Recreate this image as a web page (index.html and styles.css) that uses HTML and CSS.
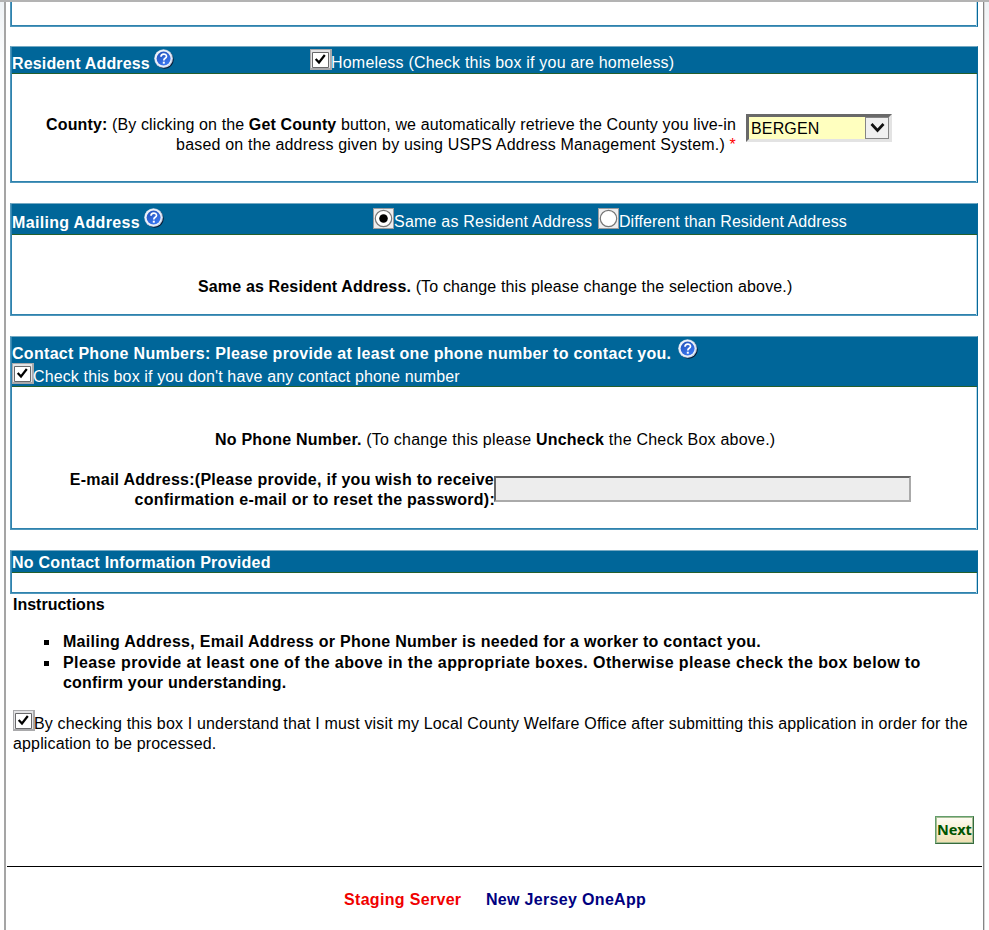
FILE: index.html
```html
<!DOCTYPE html>
<html lang="en">
<head>
<meta charset="utf-8">
<title>New Jersey OneApp</title>
<link rel="stylesheet" href="styles.css">
</head>
<body>
<svg class="defs" width="0" height="0" aria-hidden="true">
  <defs>
    <linearGradient id="blue" x1="0" y1="0" x2="0.6" y2="1"><stop offset="0" stop-color="#2350b8"/><stop offset="1" stop-color="#3976ef"/></linearGradient>
    <symbol id="help" viewBox="0 0 20 20">
      <circle cx="10.7" cy="10.7" r="9" fill="#071830"/>
      <circle cx="9.6" cy="9.6" r="9.4" fill="#b7c5dd"/>
      <circle cx="9.3" cy="9.3" r="8.6" fill="#edf2fa"/>
      <circle cx="9.6" cy="9.6" r="7" fill="url(#blue)"/>
      <path d="M7 7.7C7 4.3 12.5 4.3 12.5 7.4C12.5 9.4 9.8 9.2 9.8 11.5" fill="none" stroke="#fff" stroke-width="1.7"/>
      <rect x="8.8" y="12.7" width="2" height="2" fill="#fff"/>
    </symbol>
    <symbol id="check" viewBox="0 0 22 21">
      <path d="M0 0H22V21H0Z" fill="#a9a9ab"/><path d="M1 1H20V19H1Z" fill="#e3e3e5"/>
      <path d="M2.5 3.5H18.5V18.5H2.5Z" fill="#fff" stroke="#69696b"/>
      <path d="M5.7 10L9 13.5L14.8 6" fill="none" stroke="#000" stroke-width="2.2"/>
    </symbol>
    <symbol id="radio" viewBox="0 0 21 21">
      <path d="M0 0H21V21H0Z" fill="#9c9c9e"/><path d="M1 1H20V20H1Z" fill="#ededee"/>
      <circle cx="10.5" cy="10.5" r="8.2" fill="#fff" stroke="#777" stroke-width="1.2"/>
    </symbol>
  </defs>
</svg>
<div class="page">
  <section class="panel panel-top"></section>

  <section class="panel resident">
    <header class="bar">
      <b class="t title-res">Resident Address</b><svg class="help"><use href="#help"/></svg>
      <svg class="check"><use href="#check"/></svg><span class="t homeless">Homeless (Check this box if you are homeless)</span>
    </header>
    <div class="county">
      <div class="county-label">
        <div class="t c1"><b>County:</b> (By clicking on the <b>Get County</b> button, we automatically retrieve the County you live-in</div>
        <div class="t c2">based on the address given by using USPS Address Management System.) <span class="req">*</span></div>
      </div>
      <div class="select"><span class="t bergen">BERGEN</span><span class="arrow"><svg width="17" height="12" viewBox="0 0 17 12"><path d="M2.5 2L8.5 8.5L14.5 2" fill="none" stroke="#111" stroke-width="2.7"/></svg></span></div>
    </div>
  </section>

  <section class="panel mailing">
    <header class="bar">
      <b class="t title-mail">Mailing Address</b><svg class="help"><use href="#help"/></svg>
      <svg class="radio radio-on"><use href="#radio"/><circle cx="10.5" cy="10.5" r="4.3"/></svg><span class="t same">Same as Resident Address</span>
      <svg class="radio"><use href="#radio"/></svg><span class="t diff">Different than Resident Address</span>
    </header>
    <div class="t same-note"><b>Same as Resident Address.</b> (To change this please change the selection above.)</div>
  </section>

  <section class="panel phones">
    <header class="bar">
      <div class="row"><b class="t title-phone">Contact Phone Numbers: Please provide at least one phone number to contact you.</b><svg class="help"><use href="#help"/></svg></div>
      <div class="row"><svg class="check"><use href="#check"/></svg><span class="t nophone">Check this box if you don't have any contact phone number</span></div>
    </header>
    <div class="t phone-note"><b>No Phone Number.</b> (To change this please <b>Uncheck</b> the Check Box above.)</div>
    <div class="email">
      <div class="email-label"><b class="t e1">E-mail Address:(Please provide, if you wish to receive</b><b class="t e2">confirmation e-mail or to reset the password):</b></div>
      <div class="field"></div>
    </div>
  </section>

  <section class="panel nocontact">
    <header class="bar"><b class="t title-none">No Contact Information Provided</b></header>
  </section>

  <div class="instructions">
    <b class="t ins">Instructions</b>
    <ul>
      <li><b class="t l1">Mailing Address, Email Address or Phone Number is needed for a worker to contact you.</b></li>
      <li><b class="t l2">Please provide at least one of the above in the appropriate boxes. Otherwise please check the box below to</b><b class="t l3">confirm your understanding.</b></li>
    </ul>
    <div class="row consent"><svg class="check"><use href="#check"/></svg><span class="t k1">By checking this box I understand that I must visit my Local County Welfare Office after submitting this application in order for the</span></div>
    <div class="t k2">application to be processed.</div>
  </div>
  <div class="actions"><div class="next">Next</div></div>
  <footer><b class="t staging">Staging Server</b><b class="t oneapp">New Jersey OneApp</b></footer>
</div>
</body>
</html>
```
FILE: styles.css
```css
* { box-sizing: border-box; }
body { margin: 0; height: 930px; overflow: hidden; background: linear-gradient(#eef2f5, #fff 70px); color: #000; font: 16px/20px "Liberation Sans", Arial, sans-serif; }
.defs { position: absolute; }
.page { height: 930px; margin-left: 4px; width: 980px; border-left: 2px solid #a5a5a5; border-right: 1px solid #858585; box-shadow: 1px 0 #d5d5d5; background: #fff; }
.page::before { content: ""; display: block; height: 2px; margin: 0 -6px; background: #b3b3b3; }
.t { display: block; width: max-content; white-space: nowrap; flex: none; letter-spacing: .15px; }
svg { flex: none; display: block; }
.title-res { width: 138px; }
.homeless { letter-spacing: .2px; }
.c1 { letter-spacing: .13px; }
.c2 { letter-spacing: .185px; }
.title-mail { width: 128px; letter-spacing: .33px; }
.same { width: 198px; letter-spacing: .22px; }
.diff { letter-spacing: .07px; }
.title-phone { width: 660px; letter-spacing: .3px; }
.nophone { letter-spacing: .13px; }
.phone-note { letter-spacing: .22px; }
.e1, .title-none { letter-spacing: .26px; }
.e2 { letter-spacing: .26px; margin-right: -1px; }
.ins { letter-spacing: 0; }
.l1 { letter-spacing: .287px; }
.l2 { letter-spacing: .4px; }
.l3 { letter-spacing: .21px; }
.k1 { letter-spacing: .165px; }
.panel { width: 968px; margin: 0 0 20px 4px; border: 1px solid #4f97bc; border-top-color: #75a9c3; border-right-color: #06699a; box-shadow: inset 1px 0 #2f82ad, inset -1px 0 #b8d8e8, inset 0 -1px #2f82ad; }
.bar { display: flex; align-items: flex-start; margin: 0 0 0 1px; color: #fff; background: #069; border-bottom: 1px solid #255f2c; }
.row { display: flex; }
.help { width: 20px; height: 20px; }
.check { width: 22px; height: 21px; }
.check + .t { margin-left: -1px; }
.radio { width: 21px; height: 21px; }
.panel-top { height: 25px; margin-bottom: 19px; border-top: 0; }
.resident { height: 137px; }
.resident .bar { height: 27px; }
.resident .bar .t { margin-top: 6px; }
.resident .bar .title-res { margin-top: 7px; }
.resident .help { margin: 2px 0 0 4px; }
.resident .check { margin: 2px 0 0 136px; }
.county { display: flex; padding-top: 41px; }
.county-label { width: 725px; display: flex; flex-direction: column; align-items: flex-end; }
.req { color: #f00; }
.select { width: 146px; height: 28px; margin: -1px 0 0 10px; display: flex; border: 3px solid #696969; border-right-color: #e3e3e3; border-bottom-color: #e3e3e3; background: #ffffbf; padding-left: 2px; }
.bergen { margin-top: 2px; }
.arrow { margin-left: auto; width: 24px; height: 22px; display: flex; align-items: center; justify-content: center; border: 1px solid #858585; background: #f0f0f0; }
.mailing { height: 113px; }
.mailing .bar { height: 31px; }
.mailing .bar .t { margin-top: 8px; }
.mailing .bar .title-mail { margin-top: 9px; }
.mailing .help { margin: 4px 0 0 4px; }
.radio { margin: 4px 0 0 6px; }
.radio-on { margin-left: 209px; }
.same-note { margin: 42px 0 0 187px; }
.phones { height: 194px; }
.phones .bar { display: block; height: 50px; }
.title-phone { margin-top: 7px; }
.phones .help { margin: 2px 0 0 6px; }
.phones .row { height: 26px; }
.nophone { margin-top: 4px; }
.phone-note { margin: 43px 0 0 204px; }
.email { display: flex; margin-top: 20px; }
.email-label { width: 483px; display: flex; flex-direction: column; align-items: flex-end; }
.field { width: 417px; height: 26px; margin-top: 6px; background: #ededed; border: 2px solid; border-color: #656565 #aaa #aaa #656565; }
.nocontact { height: 44px; margin-bottom: 0; }
.nocontact .bar { height: 22px; padding-top: 2px; }
.instructions { margin: 0 0 0 7px; padding-top: 1px; height: 222px; }
.instructions ul { list-style: none; margin: 17px 0 17px; padding: 0 0 0 50px; }
.instructions li { position: relative; }
.instructions li + li { margin-top: 1px; }
.instructions li::before { content: ""; position: absolute; left: -19px; top: 8px; width: 5px; height: 5px; background: #000; }
.k1 { margin-top: 4px; }
.consent { height: 24px; }
.actions { height: 50px; display: flex; justify-content: flex-end; padding-right: 9px; }
.next { width: 39px; height: 28px; border: 1px solid #376b3d; border-color: #639d6b #376b3d #376b3d #639d6b; box-shadow: inset 0 0 0 1px #a5bd93; background: linear-gradient(#fefdf5, #efdfb0); color: #050; font: bold 14.5px/25px "Noto Sans", "Open Sans", sans-serif; white-space: nowrap; text-align: center; }
footer { border-top: 1px solid #000; margin: 0 1px; padding: 23px 0 0 337px; display: flex; gap: 25px; }
.staging, .oneapp { letter-spacing: .32px; }
.staging { width: 117px; color: #f00000; }
.oneapp { color: navy; }
```
